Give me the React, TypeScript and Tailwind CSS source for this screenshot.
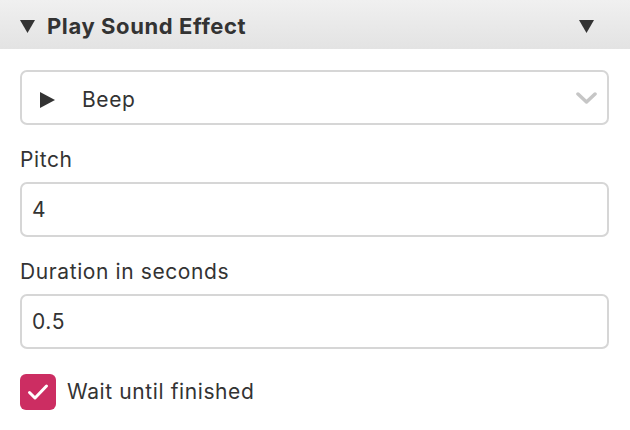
import { useState } from "react";

const font = { fontFamily: "Inter, 'Helvetica Neue', Arial, sans-serif" };

const Triangle = ({ className }: { className?: string }) => (
  <svg width="15" height="13" viewBox="0 0 15 13" className={className}>
    <path d="M0 0 H15 L7.5 13 Z" fill="#333333" />
  </svg>
);

const App = () => {
  const [pitch, setPitch] = useState("4");
  const [duration, setDuration] = useState("0.5");
  const [wait, setWait] = useState(true);

  return (
    <div className="min-h-screen w-[630px] bg-white text-[#333333]" style={font}>
      {/* Header */}
      <div className="flex h-[49px] items-center justify-between bg-gradient-to-b from-[#f0f0f0] to-[#e3e3e3] pt-[3px] pl-5 pr-[36px]">
        <div className="flex items-center gap-3">
          <Triangle />
          <span className="text-[22px] font-bold tracking-[0.6px] text-[#333333]">Play Sound Effect</span>
        </div>
        <Triangle />
      </div>

      <div className="px-5 pr-[21px] pt-[21px]">
        {/* Sound select */}
        <div className="flex h-[55px] items-center justify-between rounded-[7px] border-2 border-[#d6d6d6] pt-[5px] pl-[18px] pr-[10px]">
          <div className="flex items-center gap-[27px]">
            <svg width="15" height="16" viewBox="0 0 15 16">
              <path d="M0 0 L15 8 L0 16 Z" fill="#333333" />
            </svg>
            <span className="text-[21px] tracking-[0.6px]">Beep</span>
          </div>
          <svg width="21" height="12" viewBox="0 0 21 12" className="-mt-[5px]">
            <path d="M2 2 L10.5 10 L19 2" fill="none" stroke="#c6c6c6" strokeWidth="3.5" strokeLinecap="round" strokeLinejoin="round" />
          </svg>
        </div>

        {/* Pitch */}
        <label className="mt-[23px] mb-[10px] block text-[21px] leading-[24px] tracking-[0.6px]">Pitch</label>
        <input
          value={pitch}
          onChange={(e) => setPitch(e.target.value)}
          className="block h-[55px] w-full rounded-[7px] border-2 border-[#d6d6d6] px-[10px] text-[21px] tracking-[0.6px] text-[#333333] outline-none"
          style={font}
        />

        {/* Duration */}
        <label className="mt-[23px] mb-[10px] block text-[21px] leading-[24px] tracking-[0.6px]">Duration in seconds</label>
        <input
          value={duration}
          onChange={(e) => setDuration(e.target.value)}
          className="block h-[55px] w-full rounded-[7px] border-2 border-[#d6d6d6] px-[10px] text-[21px] tracking-[0.6px] text-[#333333] outline-none"
          style={font}
        />

        {/* Wait checkbox */}
        <button
          type="button"
          onClick={() => setWait(!wait)}
          className="mt-[25px] flex items-center gap-[11px]"
        >
          <span
            className={
              wait
                ? "flex h-[36px] w-[36px] items-center justify-center rounded-[6px] bg-[#cc2d62]"
                : "flex h-[36px] w-[36px] items-center justify-center rounded-[6px] border-2 border-[#d6d6d6] bg-white"
            }
          >
            {wait && (
              <svg width="22" height="18" viewBox="0 0 22 18">
                <path d="M2.5 9.5 L8 15 L19.5 3" fill="none" stroke="#ffffff" strokeWidth="3" strokeLinecap="round" strokeLinejoin="round" />
              </svg>
            )}
          </span>
          <span className="text-[21px] tracking-[0.6px]">Wait until finished</span>
        </button>
      </div>
    </div>
  );
};

export default App;
